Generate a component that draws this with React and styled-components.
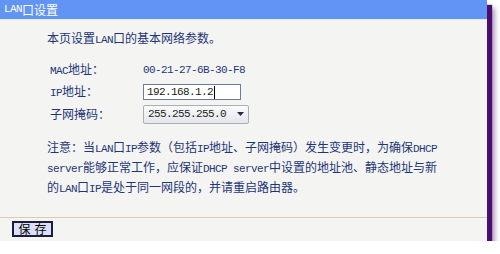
import styled, { createGlobalStyle } from "styled-components";

const GlobalStyle = createGlobalStyle`
  html, body {
    margin: 0;
    padding: 0;
    background: #ffffff;
  }
  body {
    font-family: "Noto Sans CJK SC", "Liberation Sans", sans-serif;
  }
`;

const Panel = styled.div`
  width: 487px;
  height: 241px;
  display: flex;
  flex-direction: column;
  background: #f4f4f3;
  box-shadow: 5px 5px 1px #4a0f6c, 8px 8px 5px rgba(80, 30, 120, 0.45);
`;

const Header = styled.div`
  height: 19px;
  display: flex;
  align-items: center;
  padding-left: 4px;
  background: #6194f4;
  border-bottom: 1px solid #e3ebfb;
  color: #ffffff;
  font-size: 12px;
  line-height: 19px;
`;

const Body = styled.div`
  flex: 1;
  padding: 10px 0 0 47px;
  color: #1e3678;
  font-size: 12px;
`;

const Intro = styled.div`
  line-height: 16px;
  margin-bottom: 11px;
`;

const Form = styled.div`
  display: grid;
  grid-template-columns: 93px auto;
  grid-auto-rows: 22px;
  align-items: center;
  padding-left: 3px;
`;

const Label = styled.div`
  line-height: 16px;
`;

const Value = styled.div`
  display: flex;
  align-items: center;
`;

const En = styled.span`
  font-family: "Liberation Mono", monospace;
  font-size: 11px;
  letter-spacing: -0.6px;
`;

const TextBox = styled.div`
  width: 93px;
  height: 14px;
  display: flex;
  align-items: center;
  padding-left: 3px;
  background: #ffffff;
  border: 1px solid #6b7c96;
  color: #222222;
`;

const Caret = styled.span`
  width: 1px;
  height: 13px;
  margin-left: 1px;
  background: #000000;
`;

const SelectBox = styled.div`
  width: 100px;
  height: 17px;
  display: flex;
  align-items: center;
  justify-content: space-between;
  padding-left: 4px;
  border: 1px solid #a9afb8;
  border-radius: 2px;
  background: linear-gradient(#fbfbfc, #e4e6ea);
  color: #222222;
`;

const Arrow = styled.span`
  width: 16px;
  display: flex;
  justify-content: center;
  align-items: center;
`;

const Note = styled.div`
  margin-top: 13px;
  line-height: 18px;
  white-space: nowrap;
`;

const Footer = styled.div`
  height: 24px;
  border-top: 1px solid #e6c9a6;
  padding: 3px 0 0 12px;
  box-sizing: border-box;
`;

const SaveButton = styled.button`
  width: 41px;
  height: 16px;
  padding: 0;
  display: flex;
  align-items: center;
  justify-content: center;
  background: #dcdff8;
  border: 2px solid #1c1c3c;
  color: #000000;
  font-family: "Noto Sans CJK SC", sans-serif;
  font-size: 12px;
  line-height: 12px;
  letter-spacing: 4px;
  text-indent: 4px;
`;

export default function App() {
  return (
    <>
      <GlobalStyle />
      <Panel>
        <Header>
          <En>LAN</En>口设置
        </Header>
        <Body>
          <Intro>
            本页设置<En>LAN</En>口的基本网络参数。
          </Intro>
          <Form>
            <Label>
              <En>MAC</En>地址：
            </Label>
            <Value>
              <En>00-21-27-6B-30-F8</En>
            </Value>
            <Label>
              <En>IP</En>地址：
            </Label>
            <Value>
              <TextBox>
                <En>192.168.1.2</En>
                <Caret />
              </TextBox>
            </Value>
            <Label>子网掩码：</Label>
            <Value>
              <SelectBox>
                <En>255.255.255.0</En>
                <Arrow>
                  <svg width="7" height="4" viewBox="0 0 7 4">
                    <path d="M0 0h7L3.5 4z" fill="#1e2a50" />
                  </svg>
                </Arrow>
              </SelectBox>
            </Value>
          </Form>
          <Note>
            注意：当<En>LAN</En>口<En>IP</En>参数（包括<En>IP</En>地址、子网掩码）发生变更时，为确保<En>DHCP</En>
            <br />
            <En>server</En>能够正常工作，应保证<En>DHCP server</En>中设置的地址池、静态地址与新
            <br />
            的<En>LAN</En>口<En>IP</En>是处于同一网段的，并请重启路由器。
          </Note>
        </Body>
        <Footer>
          <SaveButton>保存</SaveButton>
        </Footer>
      </Panel>
    </>
  );
}
